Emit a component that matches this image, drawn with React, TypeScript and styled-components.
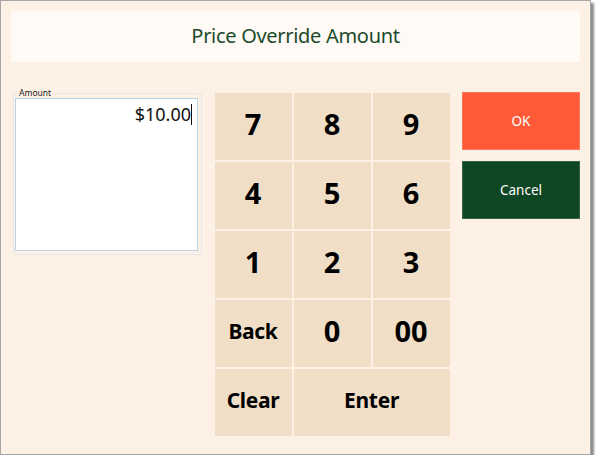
import styled, { createGlobalStyle } from "styled-components";

const GlobalStyle = createGlobalStyle`
  html, body {
    margin: 0;
    padding: 0;
    background: #ffffff;
  }
  body {
    font-family: "Noto Sans", "Open Sans", sans-serif;
  }
`;

const keys: { label: string; word?: boolean; wide?: boolean }[] = [
  { label: "7" }, { label: "8" }, { label: "9" },
  { label: "4" }, { label: "5" }, { label: "6" },
  { label: "1" }, { label: "2" }, { label: "3" },
  { label: "Back", word: true }, { label: "0" }, { label: "00" },
  { label: "Clear", word: true }, { label: "Enter", word: true, wide: true },
];

export default function App(): JSX.Element {
  return <>
    <GlobalStyle />
    <Window>
      <Header>Price Override Amount</Header>
      <Body>
        <AmountGroup>
          <Legend>Amount</Legend>
          <AmountBox>
            <AmountValue>$10.00</AmountValue>
            <Caret />
          </AmountBox>
        </AmountGroup>
        <Keypad>
          {keys.map((k, index) => <Key $word={k.word} $wide={k.wide} key={index}>{k.label}</Key>)}
        </Keypad>
        <Actions>
          <ActionButton $tone="ok">OK</ActionButton>
          <ActionButton $tone="cancel">Cancel</ActionButton>
        </Actions>
      </Body>
    </Window>
  </>;
}

const Window = styled.div`
  box-sizing: border-box;
  width: 591px;
  height: 455px;
  border: 1px solid #a6a6a6;
  background: #fdf1e6;
  box-shadow: 3px 3px 2px rgba(0, 0, 0, 0.45);
  padding: 10px;
  display: flex;
  flex-direction: column;
  gap: 30px;
`;

const Header = styled.div`
  height: 51px;
  background: #fffaf5;
  display: flex;
  align-items: center;
  justify-content: center;
  color: #1c4a2d;
  font-size: 20px;
  letter-spacing: -0.3px;
  padding-bottom: 2px;
  box-sizing: border-box;
`;

const Body = styled.div`
  display: grid;
  grid-template-columns: 189px 235px 118px;
  column-gap: 12.5px;
  padding-left: 2px;
  align-items: start;
`;

const AmountGroup = styled.div`
  position: relative;
  box-sizing: border-box;
  margin-top: 1px;
  height: 162px;
  border: 1px solid #e4e6ea;
  border-radius: 3px;
  padding: 4px 3px 3px 1px;
  display: flex;
`;

const Legend = styled.span`
  position: absolute;
  top: -7px;
  left: 3px;
  padding: 0 2px;
  background: #fdf1e6;
  font-family: "Noto Sans", sans-serif;
  font-size: 8.5px;
  line-height: 11px;
  color: #222;
`;

const AmountBox = styled.div`
  flex: 1;
  box-sizing: border-box;
  background: #ffffff;
  border: 1px solid #bcd4e6;
  display: flex;
  justify-content: flex-end;
  align-items: flex-start;
  padding: 4px 5px 0 0;
`;

const AmountValue = styled.span`
  font-size: 18px;
  line-height: 22px;
  color: #111;
`;

const Caret = styled.span`
  width: 1px;
  height: 21px;
  margin-top: 1px;
  background: #111;
`;

const Keypad = styled.div`
  display: grid;
  grid-template-columns: repeat(3, 77px);
  grid-auto-rows: 67px;
  gap: 2px;
  margin-top: 1px;
`;

const Key = styled.div<{ $word?: boolean; $wide?: boolean }>`
  grid-column: ${({ $wide }) => ($wide ? "span 2" : "auto")};
  box-sizing: border-box;
  background: #f0dfc6;
  display: flex;
  align-items: center;
  justify-content: center;
  padding-bottom: 6px;
  font-weight: 700;
  color: #000;
  font-size: ${({ $word }) => ($word ? "21px" : "29px")};
  letter-spacing: ${({ $word }) => ($word ? "-0.3px" : "0")};
`;

const Actions = styled.div`
  display: flex;
  flex-direction: column;
  gap: 11px;
`;

const ActionButton = styled.div<{ $tone: "ok" | "cancel" }>`
  height: 58px;
  display: flex;
  align-items: center;
  justify-content: center;
  background: ${({ $tone }) => ($tone === "ok" ? "#ff5a37" : "#0f4623")};
  border: 1px solid ${({ $tone }) => ($tone === "ok" ? "#ff7a5c" : "#3a6448")};
  box-sizing: border-box;
  color: #ffffff;
  font-size: 13.5px;
`;
